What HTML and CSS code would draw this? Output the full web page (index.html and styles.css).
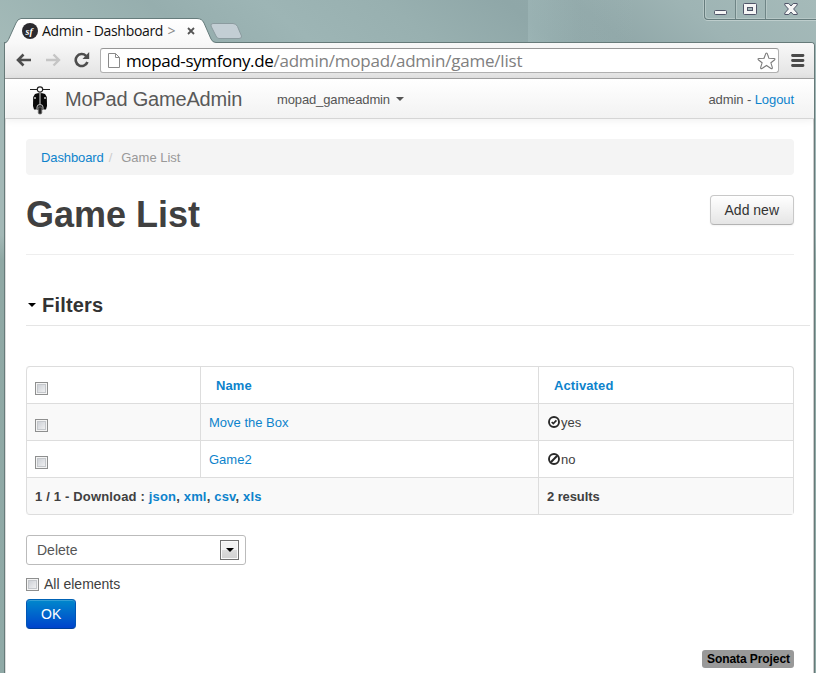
FILE: index.html
```html
<!DOCTYPE html>
<html lang="en">
<head>
<meta charset="utf-8">
<title>Admin - Dashboard</title>
<link rel="stylesheet" href="styles.css">
</head>
<body>
<div class="window">
  <header class="titlebar">
    <svg class="tab-shape" width="244" height="26" viewBox="0 0 244 26">
      <defs>
        <linearGradient id="tabFill" x1="0" y1="0" x2="0" y2="1"><stop offset="0" stop-color="#fff"/><stop offset="1" stop-color="#f8f8f8"/></linearGradient>
      </defs>
      <path d="M0 26V25Q2 24.500 3.500 21.500L11 5Q12.500 1 16 .5H192Q197 .5 199 5L206 21Q207.500 24.500 211 24.500H214V26Z" fill="url(#tabFill)"/>
      <path d="M0 25Q2 24.500 3.500 21.500L11 5Q12.500 1 16 .5H192Q197 .5 199 5L206 21Q207.500 24.500 211 24.500H214" fill="none" stroke="#667c7c"/>
      <path d="M208 5.500H228Q231 5.500 232.500 8.500L236.500 18Q237 20.500 234 20.500H214Q212 20.500 211 18L206 8Q205.500 5.500 208 5.500Z" fill="#c3ced4" stroke="#8b9b9f"/>
    </svg>
    <div class="tab">
      <svg width="16" height="16" viewBox="0 0 16 16"><circle cx="8" cy="8" r="8" fill="#2b2a2e"/><text x="3.500" y="11.500" class="logo-text">sf</text></svg>
      <span class="tab-title">Admin - Dashboard <span class="fade">&gt;</span></span>
      <svg class="tab-close" width="8" height="8" viewBox="0 0 8 8"><path d="M1 1L7 7M7 1L1 7" stroke="#555" stroke-width="1.800"/></svg>
    </div>
    <div class="controls">
      <div class="ctl min"><svg width="14" height="6"><rect x=".5" y=".5" width="12" height="4" rx="1" fill="#f5f5f5" stroke="#505568"/></svg></div>
      <div class="ctl max"><svg width="14" height="12"><rect x=".5" y=".5" width="13" height="11" rx="1" fill="#f5f5f5" stroke="#505568"/><rect x="4.500" y="4.500" width="5" height="3" fill="#a5b8b8" stroke="#505568"/></svg></div>
      <div class="ctl close"><svg width="14" height="12" viewBox="0 0 14 12"><path d="M.8.500H4.800L7 3 9.200.500H13.200V2L9.600 6 13.200 10V11.500H9.200L7 9 4.800 11.500H.8V10L4.400 6 .8 2Z" fill="#f5f5f5" stroke="#505568"/></svg></div>
    </div>
  </header>

  <div class="frame">
    <div class="toolbar">
      <svg class="nav-icon" width="16" height="14" viewBox="0 0 16 14"><path d="M15 7H2.500M7.500 1.500L2 7L7.500 12.500" fill="none" stroke="#4d4d4d" stroke-width="2.600"/></svg>
      <svg class="nav-icon forward" width="16" height="14" viewBox="0 0 16 14"><path d="M1 7H13.500M8.500 1.500L14 7L8.500 12.500" fill="none" stroke="#c5c5c5" stroke-width="2.400"/></svg>
      <svg class="nav-icon reload" width="16" height="16" viewBox="0 0 16 16"><path d="M13.400 10A6 6 0 1 1 12 3.800" fill="none" stroke="#4d4d4d" stroke-width="2.600"/><path d="M15.200 0V7H8.500Z" fill="#4d4d4d"/></svg>
      <div class="address">
        <svg class="page-icon" width="12" height="15" viewBox="0 0 12 15"><path d="M.5.500H7.500L11.500 4.500V14.500H.5ZM7.500.500V4.500H11.500" fill="#fff" stroke="#8a8a8a"/></svg>
        <span class="url"><span class="host">mopad-symfony.de</span>/admin/mopad/admin/game/list</span>
        <svg class="star" width="19" height="18" viewBox="0 0 19 18"><path d="M9.500 1Q10.200 1 10.800 3L11.900 6.300 17 6.500Q18.700 6.700 17.400 8L13.900 10.800 15.300 15.300Q15.600 17.200 14 16.400L9.500 13.500 5 16.400Q3.400 17.200 3.700 15.300L5.100 10.800 1.600 8Q.3 6.700 2 6.500L7.100 6.300 8.200 3Q8.800 1 9.500 1Z" fill="#fff" stroke="#7c7c7c" stroke-width="1.100"/></svg>
      </div>
      <svg class="menu" width="14" height="13" viewBox="0 0 14 13"><path d="M1.500 1.500H12M1.500 6.500H12M1.500 11.500H12" stroke="#4a4a4a" stroke-width="2.800" stroke-linecap="round"/></svg>
    </div>

    <nav class="navbar">
      <svg class="scooter" width="22" height="29" viewBox="0 0 22 29">
        <path d="M1 3.500H8M14 3.500H21" stroke="#222" stroke-width="1.200"/>
        <circle cx="11" cy="3.500" r="2.700" fill="#fff" stroke="#222" stroke-width="1.200"/>
        <path d="M6 8Q11 6 16 8L17.800 11 18 20 17 23.500H5L4 20 4.200 11Z" fill="#080808"/>
        <path d="M11 7V20" stroke="#bbb" stroke-width="1.200"/>
        <circle cx="6" cy="12" r="1" fill="#ccc"/><circle cx="16" cy="12" r="1" fill="#ccc"/>
        <path d="M8 24V21Q8 18.500 11 18.500T14 21V24" fill="#222" stroke="#bbb"/>
        <rect x="9.300" y="21" width="3.500" height="7" rx="1.300" fill="#222" stroke="#777" stroke-width=".8"/>
      </svg>
      <a class="brand">MoPad GameAdmin</a>
      <a class="dropdown"><span>mopad_gameadmin</span><i class="caret"></i></a>
      <span class="user">admin - <a class="link">Logout</a></span>
    </nav>

    <main class="content">
      <div class="breadcrumb"><a class="link">Dashboard</a><span class="slash">/</span><span class="current">Game List</span></div>
      <div class="page-header"><h1>Game List</h1><button class="btn">Add new</button></div>
      <div class="filters"><i class="arrow"></i><h2>Filters</h2></div>
      <table class="grid">
        <colgroup><col class="c1"><col class="c2"><col class="c3"></colgroup>
        <tr><th><i class="check"></i></th><th class="head"><a class="link">Name</a></th><th class="head"><a class="link">Activated</a></th></tr>
        <tr class="odd"><td><i class="check"></i></td><td><a class="link">Move the Box</a></td><td><span class="state"><svg width="12" height="12" viewBox="0 0 12 12"><circle cx="6" cy="6" r="5" fill="#fff" stroke="#292929" stroke-width="1.900"/><path d="M3.700 6L5.300 7.500 8.400 4.300" fill="none" stroke="#292929" stroke-width="1.700"/></svg><span>yes</span></span></td></tr>
        <tr><td><i class="check"></i></td><td><a class="link">Game2</a></td><td><span class="state"><svg width="12" height="12" viewBox="0 0 12 12"><circle cx="6" cy="6" r="5" fill="#fff" stroke="#292929" stroke-width="1.900"/><path d="M2.800 9.200L9.200 2.800" stroke="#292929" stroke-width="2"/></svg><span>no</span></span></td></tr>
        <tr class="odd"><th colspan="2"><span class="download">1 / 1 - Download : <a class="link">json</a>, <a class="link">xml</a>, <a class="link">csv</a>, <a class="link">xls</a></span></th><th><span class="results">2 results</span></th></tr>
      </table>
      <div class="select"><span>Delete</span><span class="select-btn"><i class="arrow"></i></span></div>
      <label class="all"><i class="check"></i><span>All elements</span></label>
      <button class="btn primary">OK</button>
      <footer><span class="badge">Sonata Project</span></footer>
    </main>
  </div>
</div>
</body>
</html>
```
FILE: styles.css
```css
* { box-sizing: border-box; }
body { margin: 0; font: 13px/18px "Liberation Sans", Arial, sans-serif; color: #404040; }
svg { display: block; flex: none; }
h1, h2 { margin: 0; }
.link { color: #0d83cc; }
.window {
  width: 816px; height: 673px; overflow: hidden; display: flex; flex-direction: column;
  background: linear-gradient(180deg, transparent 235px, #8fa8a4 260px, #8fa9a6 100%), linear-gradient(90deg, #a3b8b6, #9fb5b5);
}
.titlebar {
  height: 42px; flex: none; display: flex; position: relative;
  background: linear-gradient(90deg, transparent 528px, rgba(190,215,215,.22) 528px, rgba(190,215,215,.05) 580px, transparent 640px),
    linear-gradient(38deg, #a4bab8 0, #9bb3b2 14%, #96aeae 23%, #9db5b5 36%, #98b0b0 50%, #8fa7a8 64%, #91a8a9 72%, #9eb4b4 84%, #a5bab9 100%);
}
.tab-shape { position: absolute; left: 5px; top: 18px; z-index: 1; }
.tab { position: relative; z-index: 2; display: flex; align-items: center; width: 190px; height: 18px; margin: 22px 0 0 22px; }
.logo-text { font: italic bold 10px "Liberation Serif", serif; fill: #fff; }
.tab-title { font: 14px/18px "Open Sans", sans-serif; color: #111; margin-left: 4px; width: 140px; white-space: nowrap; letter-spacing: -.32px; }
.fade { color: #888; margin-left: 1px; }
.tab-close { margin-left: 5px; }
.controls { display: flex; width: 112px; height: 20px; margin-left: auto; border: 1px solid #667c7d; border-top: 0; border-right: 0; border-radius: 0 0 0 4px; box-shadow: 0 1px #bdcdcc, -1px 0 #b5c6c5, inset 1px -1px #b6c7c6; }
.ctl { display: flex; justify-content: center; height: 19px; border-right: 1px solid #6f8586; box-shadow: 1px 0 #b6c7c6; }
.min { width: 31px; padding: 10px 0 0 2px; }
.max { width: 31px; padding-top: 3px; padding-right: 2px; }
.close { width: 50px; padding-top: 3px; border: 0; box-shadow: none; }
.frame { flex: 1; margin: 0 1px 0 4px; border: 1px solid #667a79; border-bottom: 0; border-radius: 0 4px 0 0; background: #fff; box-shadow: inset 1px 0 #ddd, inset -1px 0 #ccc; overflow: hidden; }
.toolbar { height: 36px; display: flex; align-items: center; padding: 0 9px 0 11px; background: linear-gradient(#f8f8f8, #e3e3e3); border-bottom: 1px solid #a4a4a4; }
.nav-icon { margin-top: -1px; }
.forward { margin-left: 13px; }
.reload { margin-left: 13px; }
.address { display: flex; align-items: center; height: 25px; width: 679px; margin-left: 10px; padding: 0 2px 0 7px; background: #fff; border: 1px solid #b0b0b0; border-top-color: #969696; border-radius: 3px; }
.url { font: 17px/23px "Open Sans", sans-serif; color: #808080; margin-left: 6px; white-space: nowrap; letter-spacing: -.21px; }
.host { color: #000; letter-spacing: -.37px; }
.star { margin-left: auto; }
.menu { margin-left: 12px; }
.navbar { height: 40px; display: flex; align-items: center; padding: 0 20px 0 24px; background: linear-gradient(#fff, #f2f2f2); border-bottom: 1px solid #d5d5d5; box-shadow: 0 1px 8px rgba(0,0,0,.07); white-space: nowrap; }
.scooter { margin-top: 4px; }
.brand { font-size: 20px; color: #595959; width: 212px; margin-left: 14px; letter-spacing: -.2px; }
.dropdown { display: flex; align-items: center; gap: 6px; color: #555; letter-spacing: -.13px; padding-top: 2px; }
.caret { border: 4px solid transparent; border-top-color: #555; border-bottom: 0; margin-top: -2px; }
.user { margin-left: auto; color: #555; letter-spacing: -.08px; padding-top: 2px; }
.content { padding: 20px 20px 0 21px; }
.breadcrumb { height: 36px; padding: 10px 15px; background: #f4f4f4; border-radius: 4px; letter-spacing: -.1px; }
.slash { color: #ccc; margin: 0 9px 0 5px; }
.current { color: #999; letter-spacing: 0; }
.page-header { display: flex; justify-content: space-between; height: 80px; padding-top: 20px; border-bottom: 1px solid #eee; }
h1 { font-size: 36px; line-height: 40px; }
.btn { height: 30px; padding: 0 14px; font: 14px/20px "Liberation Sans", sans-serif; color: #333; border: 1px solid #c8c8c8; border-bottom-color: #b3b3b3; border-radius: 4px; background: linear-gradient(#fff, #e5e5e5); box-shadow: inset 0 1px #fff, 0 1px 2px rgba(0,0,0,.05); }
.filters { display: flex; align-items: center; margin: 30px -16px 0 0; height: 41px; border-bottom: 1px solid #e5e5e5; padding-left: 2px; }
.arrow { display: block; border: 4px solid transparent; border-top-color: #000; border-bottom: 0; }
h2 { font-size: 20px; line-height: 36px; color: #333; margin-left: 6px; letter-spacing: .2px; }
.grid { width: 768px; margin-top: 40px; table-layout: fixed; border-collapse: separate; border-spacing: 0; border: 1px solid #ddd; border-left: 0; border-radius: 4px; }
.c1 { width: 174px; }
.c2 { width: 338px; }
.c3 { width: 255px; }
.grid th, .grid td { height: 37px; padding: 2px 8px 0; border-left: 1px solid #ddd; border-top: 1px solid #ddd; text-align: left; vertical-align: middle; white-space: nowrap; }
.grid tr:first-child th { height: 36px; border-top: 0; }
.grid tr:first-child th:first-child { border-top-left-radius: 4px; }
.grid tr:last-child th:first-child { border-bottom-left-radius: 4px; }
.grid .head { padding-left: 15px; letter-spacing: .1px; }
.odd { background: #f9f9f9; }
.check { display: block; width: 13px; height: 13px; border: 1px solid #8e8f8f; background: linear-gradient(135deg, #c5c9d0, #f8f8f8); box-shadow: inset 0 0 0 1px #f4f4f4, inset 0 0 0 2px #c5c8cc; }
.grid .check { margin-top: 4px; }
.state { display: flex; align-items: center; gap: 1px; margin-left: 1px; }
.state svg { margin-top: -2px; }
.download { letter-spacing: .17px; }
.results { letter-spacing: -.1px; }
.select { display: flex; align-items: center; width: 220px; height: 30px; margin-top: 20px; padding: 0 6px 0 10px; border: 1px solid #bbb; border-radius: 3px; font-size: 14px; color: #555; }
.select-btn { display: flex; align-items: center; justify-content: center; width: 19px; height: 20px; margin-left: auto; border: 1px solid #707070; background: linear-gradient(#f2f2f2 49%, #dcdcdc 50%, #d0d0d0); box-shadow: inset 0 0 0 1px #fafafa; }
.all { display: flex; align-items: center; height: 20px; margin: 9px 0 5px; font-size: 14px; gap: 5px; }
.primary { display: block; width: 50px; color: #fff; border-color: #0062b5 #0055b5 #003f99; background: linear-gradient(#0088cc, #0044cc); box-shadow: inset 0 1px rgba(255,255,255,.2); }
footer { display: flex; justify-content: flex-end; margin-top: 21px; }
.badge { width: 92px; height: 18px; padding: 0 4px 0 5px; border-radius: 3px; background: #999; color: #000; font-size: 12px; font-weight: bold; white-space: nowrap; letter-spacing: -.08px; }
```
